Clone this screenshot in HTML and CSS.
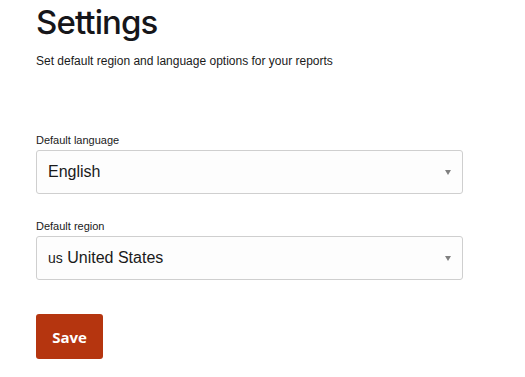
FILE: index.html
```html
<!DOCTYPE html>
<html lang="en">
<head>
    <meta charset="UTF-8">
    <meta name="viewport" content="width=device-width, initial-scale=1.0">
    <title>Settings</title>
    <link rel="stylesheet" href="styles.css">
</head>
<body>
    <div class="page">
        <h1>Settings</h1>
        <p class="subtitle">Set default region and language options for your reports</p>

        <form class="settings-form">
            <div class="field">
                <label class="field-label">Default language</label>
                <div class="select">
                    <span class="select-value">English</span>
                    <span class="select-arrow"></span>
                </div>
            </div>
            <div class="field">
                <label class="field-label">Default region</label>
                <div class="select">
                    <span class="select-value"><span class="flag">us</span> United States</span>
                    <span class="select-arrow"></span>
                </div>
            </div>
            <button type="button" class="button">Save</button>
        </form>
    </div>
</body>
</html>
```

FILE: styles.css
```css
* {
    margin: 0;
    padding: 0;
    box-sizing: border-box;
}

body {
    font-family: "Liberation Sans", Arial, sans-serif;
    background: #fff;
    color: #111;
}

.page {
    padding: 0 0 0 36px;
    width: 463px;
}

h1 {
    font-family: Inter, "Open Sans", sans-serif;
    font-size: 33px;
    font-weight: 500;
    letter-spacing: -0.9px;
    line-height: 44px;
    color: #16161a;
}

.subtitle {
    font-size: 12px;
    margin-top: 10px;
    color: #1a1a1a;
}

.settings-form {
    margin-top: 65px;
}

.field {
    margin-bottom: 25px;
}

.field-label {
    display: block;
    font-size: 11px;
    line-height: 14px;
    margin-bottom: 3px;
    color: #1a1a1a;
}

.select {
    display: flex;
    align-items: center;
    justify-content: space-between;
    height: 44px;
    padding: 0 11px 0 11px;
    border: 1px solid #cfcfcf;
    border-radius: 3px;
    background: #fdfdfd;
}

.select-value {
    font-size: 16px;
    color: #1a1a1a;
}

.flag {
    font-size: 14px;
}

.select-arrow {
    width: 0;
    height: 0;
    border-left: 3.5px solid transparent;
    border-right: 3.5px solid transparent;
    border-top: 5px solid #808080;
}

.button {
    margin-top: 9px;
    width: 67px;
    height: 45px;
    border: none;
    border-radius: 3px;
    background: #b5350f;
    color: #fff;
    font-family: "Open Sans", "Liberation Sans", sans-serif;
    font-size: 15px;
    font-weight: 700;
    cursor: pointer;
}
```
